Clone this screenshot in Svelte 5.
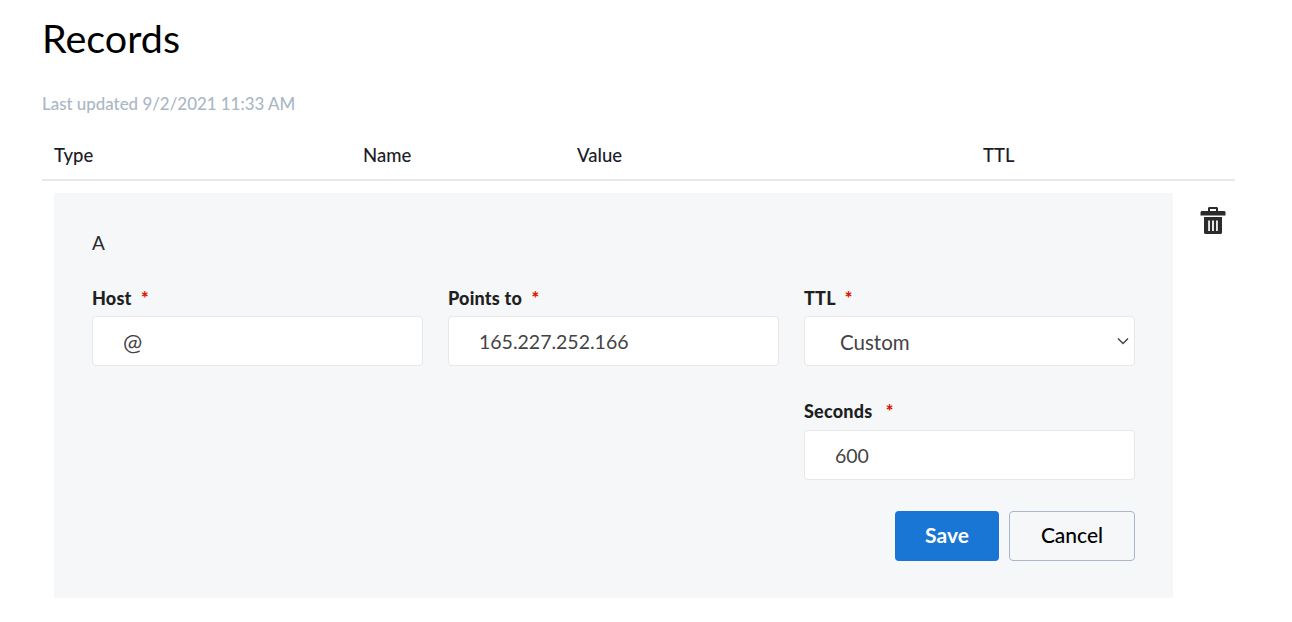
<script>
	let host = $state("@");
	let points = $state("165.227.252.166");
	let ttl = $state("Custom");
	let seconds = $state("600");

	const columns = ["Type", "Name", "Value", "TTL"];
</script>

<main>
	<h1>Records</h1>
	<p class="updated">Last updated 9/2/2021 11:33 AM</p>

	<div class="head">
		{#each columns as col}
			<span>{col}</span>
		{/each}
	</div>

	<div class="row">
		<form class="card" onsubmit={(e) => e.preventDefault()}>
			<div class="type">A</div>
			<div class="fields">
				<label>
					<span class="lbl">Host <em>*</em></span>
					<input class="host" bind:value={host} />
				</label>
				<label>
					<span class="lbl">Points to <em>*</em></span>
					<input class="points" bind:value={points} />
				</label>
				<label>
					<span class="lbl">TTL <em>*</em></span>
					<span class="select-wrap">
						<select bind:value={ttl}>
							<option>Custom</option>
							<option>1 Hour</option>
						</select>
						<svg class="chev" width="12" height="8" viewBox="0 0 12 8">
							<path d="M1 1.500l5 5 5-5" fill="none" stroke="#444" stroke-width="1.500" />
						</svg>
					</span>
				</label>
				<label class="secs">
					<span class="lbl">Seconds <em>*</em></span>
					<input class="seconds" bind:value={seconds} />
				</label>
			</div>
			<div class="actions">
				<button class="save" type="submit">Save</button>
				<button class="cancel" type="button">Cancel</button>
			</div>
		</form>

		<button class="trash" type="button" aria-label="Delete">
			<svg width="26" height="27" viewBox="0 0 26 27">
				<path d="M8 4.500V1.500C8 .7 8.600 0 9.400 0h7.200C17.400 0 18 .7 18 1.500v3h-2V2h-6v2.500z" fill="#2b2b2b" />
				<path d="M2 4h22c.8 0 1.500.7 1.500 1.500V8.500H.5V5.500C.5 4.700 1.200 4 2 4z" fill="#2b2b2b" />
				<path fill-rule="evenodd" d="M4 10h18v15.500c0 .8-.7 1.500-1.500 1.500h-15C4.700 27 4 26.300 4 25.500zM8.200 13.500V24h1.700V13.500zM12.100 13.500V24h1.800V13.500zM16.100 13.500V24h1.700V13.500z" fill="#2b2b2b" />
			</svg>
		</button>
	</div>
</main>

<style>
	:global(body) {
		background: #fff;
		font-family: Lato, "Noto Sans", sans-serif;
		color: #111;
	}

	main {
		padding: 15px 57px 0 42px;
	}

	h1 {
		margin: 0;
		font-size: 39.5px;
		line-height: 46px;
		font-weight: 400;
		color: #000;
	}

	.updated {
		margin: 31px 0 0;
		font-size: 16.9px;
		line-height: 24px;
		font-weight: 500;
		color: #aab7c4;
	}

	.head {
		display: grid;
		grid-template-columns: 309px 214px 406px 1fr;
		margin-top: 15px;
		padding: 0 12px;
		box-sizing: border-box;
		height: 50px;
		align-items: center;
		border-bottom: 2px solid #e8e8e8;
		font-size: 18.5px;
		font-weight: 500;
		color: #1c1c28;
	}

	.row {
		display: flex;
		align-items: flex-start;
		gap: 28px;
		margin-top: 12px;
		padding-left: 12px;
	}

	.card {
		width: 1119px;
		box-sizing: border-box;
		height: 405px;
		background: #f5f7f8;
		padding: 38px 38px 0;
	}

	.type {
		font-size: 19px;
		line-height: 24px;
		color: #2b2b2b;
	}

	.fields {
		display: grid;
		grid-template-columns: repeat(3, 331px);
		column-gap: 25px;
		row-gap: 33px;
		margin-top: 31px;
	}

	label {
		display: block;
	}

	.secs {
		grid-column: 3;
	}

	.lbl {
		display: block;
		height: 24px;
		margin-bottom: 6px;
		font-size: 18px;
		line-height: 24px;
		font-weight: 900;
		letter-spacing: 0.2px;
		color: #1f1f1f;
	}

	.secs .lbl {
		margin-bottom: 7px;
	}

	.lbl em {
		font-style: normal;
		color: #db1802;
		margin-left: 5px;
	}

	.secs .lbl em {
		margin-left: 9px;
	}

	.select-wrap {
		display: block;
		position: relative;
	}

	.chev {
		position: absolute;
		right: 6px;
		top: 21px;
		pointer-events: none;
	}

	input,
	select {
		display: block;
		width: 100%;
		height: 50px;
		box-sizing: border-box;
		background: #fff;
		border: 1px solid #e8e8e8;
		border-radius: 4px;
		padding-top: 2px;
		font-family: inherit;
		font-size: 19.5px;
		color: #444;
		outline: none;
	}

	.host,
	.points,
	.seconds {
		padding-left: 30px;
	}

	.host {
		font-size: 23px;
	}

	select {
		appearance: none;
		padding-left: 35px;
		font-size: 20.5px;
	}

	.actions {
		display: flex;
		justify-content: flex-end;
		gap: 10px;
		margin-top: 31px;
	}

	.actions button {
		height: 50px;
		padding: 0 0 3px;
		border-radius: 4px;
		font-family: inherit;
		font-size: 21px;
	}

	.save {
		width: 104px;
		background: #1976d5;
		border: none;
		color: #fff;
		font-weight: 700;
	}

	.cancel {
		width: 126px;
		background: transparent;
		border: 1px solid #a9b7c6;
		color: #000;
		font-weight: 500;
	}

	.trash {
		padding: 0;
		border: none;
		background: none;
		margin-top: 14px;
		margin-left: -1px;
		line-height: 0;
	}
</style>
